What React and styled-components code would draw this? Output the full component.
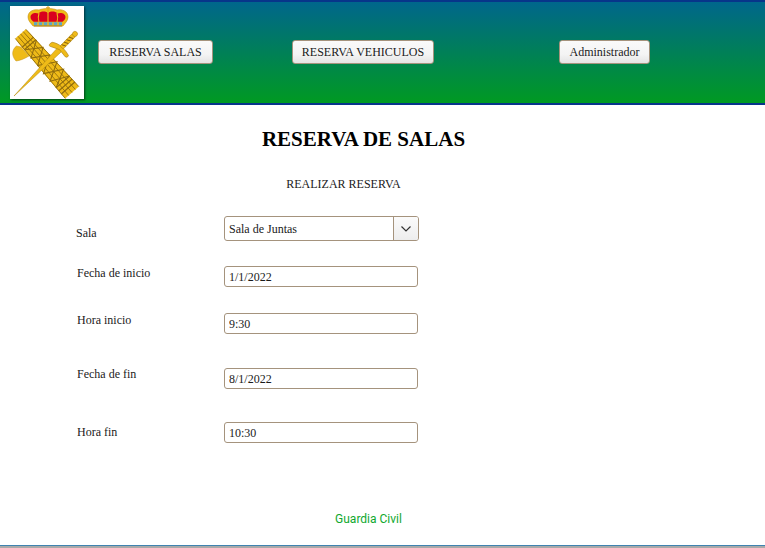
import React from "react";
import styled, { createGlobalStyle } from "styled-components";

const Global = createGlobalStyle`
  html, body { margin: 0; padding: 0; background: #fff; overflow: hidden; }
  body { font-family: "Liberation Serif", "Times New Roman", serif; font-size: 12px; color: #1a1a1a; }
`;
const Page = styled.div`
  width: 765px; height: 548px; display: flex; flex-direction: column; box-sizing: border-box;
  border-bottom: 2px solid #a9a9a9;
`;
const Header = styled.header`
  height: 105px; box-sizing: border-box; flex: none;
  border-top: 2px solid #07358a; border-bottom: 2px solid #07358a;
  background: linear-gradient(180deg, #00668c 0%, #009a22 100%);
  display: flex; align-items: center; padding: 0 0 0 10px;
`;
const LogoBox = styled.div`
  width: 74px; height: 93px; background: #fff; flex: none; box-shadow: 1px 1px 2px rgba(0,0,0,.55);
  margin-bottom: 1px;
`;
const NavButton = styled.button`
  height: 24px; box-sizing: border-box; padding: 0; width: ${p => p.$w}px; margin-left: ${p => p.$ml}px;
  margin-bottom: 1px;
  font: 12px "Liberation Serif", serif; color: #1a1a1a;
  border: 1px solid #a5937d; border-radius: 3px;
  background: linear-gradient(180deg, #fafafa 0%, #f4f4f4 60%, #e4e4e4 100%);
`;
const Main = styled.main`
  flex: 1; display: flex; flex-direction: column;
`;
const Title = styled.h1`
  margin: 21px 0 0; width: 727px; text-align: center;
  font: bold 21px/26px "Liberation Serif", serif; color: #000;
`;
const Subtitle = styled.h2`
  margin: 25px 0 0; width: 687px; text-align: center; font: normal 12px/14px "Liberation Serif", serif; color: #1a1a1a;
`;
const Form = styled.form`
  margin: 25px 0 0 76px; display: flex; flex-direction: column;
`;
const Row = styled.div`
  display: flex; align-items: flex-start; margin-top: ${p => p.$mt || 0}px;
`;
const Label = styled.label`
  width: 148px; flex: none; box-sizing: border-box; padding-top: ${p => p.$pt}px; padding-left: ${p => p.$pl || 0}px;
  font-size: 12px; line-height: ${p => p.$lh || 14}px; color: #1a1a1a;
`;
const Field = styled.input`
  width: 194px; height: 21px; box-sizing: border-box; padding: 2px 4px 0; margin: 0; outline: none;
  font: 12px "Liberation Serif", serif; color: #1a1a1a; background: #fff;
  border: 1px solid #a5937d; border-radius: 3px;
`;
const SelectBox = styled.div`
  width: 195px; height: 25px; box-sizing: border-box; display: flex; background: #fff;
  border: 1px solid #a5937d; border-radius: 3px; overflow: hidden;
`;
const SelectValue = styled.span`
  flex: 1; padding: 1px 4px 0; font-size: 12px; line-height: 22px; color: #1a1a1a;
`;
const SelectArrow = styled.span`
  width: 25px; flex: none; box-sizing: border-box; border-left: 1px solid #a5937d;
  display: flex; align-items: center; justify-content: center;
  background: linear-gradient(180deg, #fbfbfb 0%, #ededed 100%);
`;
const Footer = styled.footer`
  margin: auto 0 0; padding-bottom: 19px; width: 737px; text-align: center;
  font: 12px/14px Roboto, sans-serif; color: #0fa82e;
`;
const BottomLine = styled.div`
  height: 1px; background: #3f83b0; flex: none;
`;

const GOLD = "#efbb18";
const DARK = "#8f6c0e";

const Logo = () => (
  <svg width="74" height="93" viewBox="0 0 74 93">
    {/* crown */}
    <path d="M18 11 C18 5 24 3 29 4 C33 2 43 2 47 4 C52 3 58 5 58 11 C58 15 55 17 53 20 L23 20 C21 17 18 15 18 11 Z" fill={GOLD} stroke="#c4921a" strokeWidth=".6"/>
    <path d="M20.5 11 C20.5 7.5 25 6 28.5 7.5 C31 5 35 5 38 7 C41 5 45 5 47.5 7.5 C51 6 55.5 7.5 55.5 11 C55.5 13 54 14.5 52.5 15.8 L23.5 15.8 C22 14.5 20.5 13 20.5 11 Z" fill="#d9001e"/>
    <path d="M29 7 C28 10 28 13 29 16 M38 6 V16 M47 7 C48 10 48 13 47 16" stroke={GOLD} strokeWidth="1.1" fill="none"/>
    <path d="M38 0 V6 M36 1.8 H40" stroke="#d9a21c" strokeWidth="1"/>
    <rect x="24" y="16.2" width="28" height="3.2" fill="#5aa6c8"/>
    <path d="M28 16.2 V19.4 M33 16.2 V19.4 M38 16.2 V19.4 M43 16.2 V19.4 M48 16.2 V19.4" stroke={GOLD} strokeWidth="1.5"/>
    <path d="M24 20 H52" stroke="#b58412" strokeWidth="1"/>
    {/* axe */}
    <path d="M6.5 40 C1.5 44 1.5 50 6 55 C10 54.5 14 53 19 50 L11 41 Z" fill={GOLD} stroke="#c4921a" strokeWidth=".5"/>
    {/* fasces */}
    <g transform="translate(36.3 57.2) rotate(48.7)">
      <path d="M-39 -7 L-33 -7.6 L33 -9.2 L39 -9 L39 9 L33 9.2 L-33 7.6 L-39 7 Z" fill={GOLD}/>
      <path d="M-39 -7 L39 -9 M-39 -3.5 L39 -4.5 M-39 0 L39 0 M-39 3.5 L39 4.5 M-39 7 L39 9" stroke={DARK} strokeWidth=".8"/>
      <path d="M-28 -7.6 V7.6 M-24.5 -7.6 V7.6 M25 -9 V9 M29 -9 V9 M33 -9 V9" stroke={DARK} strokeWidth="1.2"/>
      <path d="M-24 7 L-14 -8 L-4 8 L6 -9 L16 9 L25 -9" stroke={DARK} strokeWidth="1.1" fill="none"/>
      <path d="M-24 -8 L-14 8 L-4 -8 L6 9 L16 -9 L25 9" stroke={DARK} strokeWidth="1.1" fill="none"/>
    </g>
    {/* sword */}
    <g transform="translate(4 90) rotate(-45.5)">
      <path d="M0 0 L66 -2.8 L66 2.8 Z" fill={GOLD} stroke="#b58d12" strokeWidth=".5"/>
      <path d="M62.5 -11 C61 -11 60 -9.5 61 -8.5 L65 0 L64 8 C63.5 10 65 11.5 67 10.5 C68 8 68.5 4 68.5 0 C68.5 -4 67 -8 65 -10.5 Z" fill={GOLD} stroke="#a87c10" strokeWidth=".6"/>
      <rect x="68" y="-2.2" width="17" height="4.4" fill={GOLD} stroke="#a87c10" strokeWidth=".5"/>
      <path d="M70 -2 L72 2 M73.5 -2 L75.5 2 M77 -2 L79 2 M80.5 -2 L82.5 2" stroke="#7a5a0c" strokeWidth=".9"/>
      <circle cx="87" cy="0" r="2.6" fill={GOLD} stroke="#a87c10" strokeWidth=".5"/>
    </g>
  </svg>
);

const Chevron = () => (
  <svg width="12" height="8" viewBox="0 0 12 8" fill="none"><path d="M1.5 1.5 L6 6 L10.5 1.5" stroke="#333" strokeWidth="1.2"/></svg>
);

export default function App() {
  return (
    <Page>
      <Global />
      <Header>
        <LogoBox><Logo /></LogoBox>
        <NavButton $w={115} $ml={14}>RESERVA SALAS</NavButton>
        <NavButton $w={142} $ml={79}>RESERVA VEHICULOS</NavButton>
        <NavButton $w={91} $ml={125}>Administrador</NavButton>
      </Header>
      <Main>
        <Title>RESERVA DE SALAS</Title>
        <Subtitle>REALIZAR RESERVA</Subtitle>
        <Form>
          <Row>
            <Label $pt={10}>Sala</Label>
            <SelectBox>
              <SelectValue>Sala de Juntas</SelectValue>
              <SelectArrow><Chevron /></SelectArrow>
            </SelectBox>
          </Row>
          <Row $mt={25}>
            <Label $pt={0} $pl={1}>Fecha de inicio</Label>
            <Field readOnly value="1/1/2022" />
          </Row>
          <Row $mt={26}>
            <Label $pt={0} $pl={1}>Hora inicio</Label>
            <Field readOnly value="9:30" />
          </Row>
          <Row $mt={34}>
            <Label $pt={0} $pl={1} $lh={12}>Fecha de fin</Label>
            <Field readOnly value="8/1/2022" />
          </Row>
          <Row $mt={33}>
            <Label $pt={3} $pl={1}>Hora fin</Label>
            <Field readOnly value="10:30" />
          </Row>
        </Form>
        <Footer>Guardia Civil</Footer>
      </Main>
      <BottomLine />
    </Page>
  );
}
